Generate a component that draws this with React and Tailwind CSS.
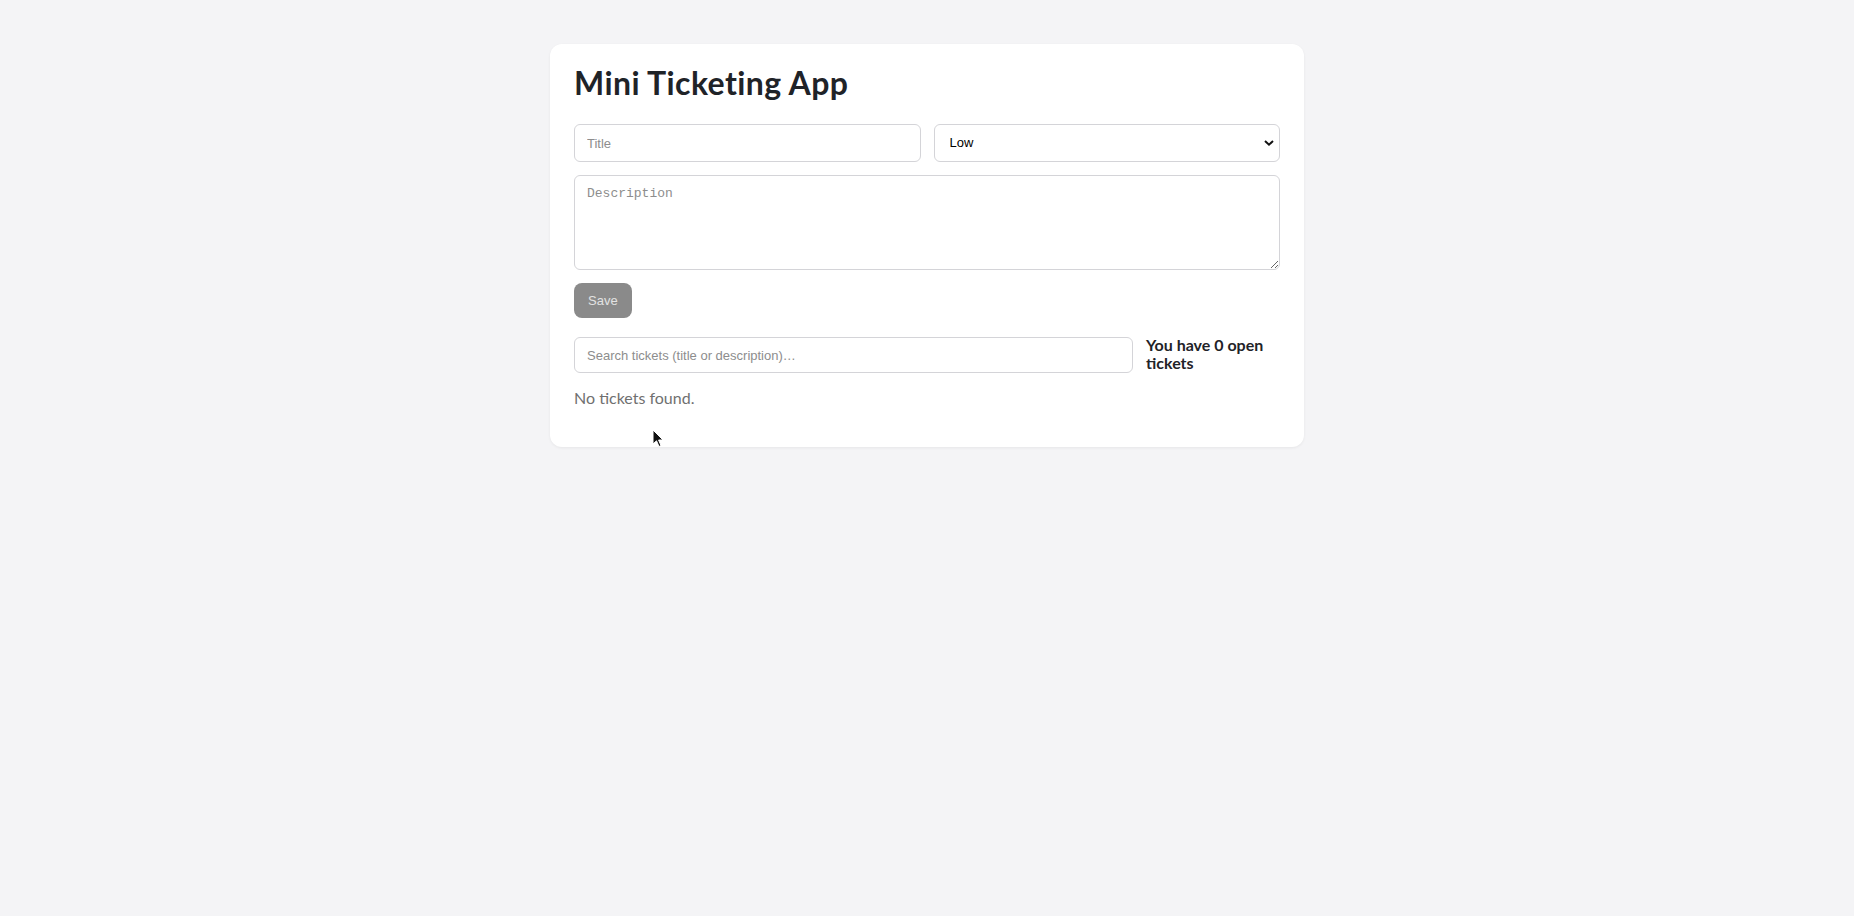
import React, { useState } from "react";

export default function App() {
  const [title, setTitle] = useState("");
  const [desc, setDesc] = useState("");
  const [q, setQ] = useState("");
  return (
    <div className="min-h-screen w-full bg-[#f4f4f6] relative" style={{ fontFamily: "Lato, 'Noto Sans', sans-serif" }}>
      <div className="pt-[44px] flex justify-center">
        <div className="w-[754px] bg-white rounded-[12px] shadow-[0_1px_3px_rgba(0,0,0,0.06)] px-6 pt-[20px] pb-[37px]">
          <h1 className="text-[32px] leading-[37px] font-bold tracking-[0.4px] text-[#1f2328] mb-[23px]">Mini Ticketing App</h1>
          <div className="grid grid-cols-2 gap-[13px]">
            <input
              value={title}
              onChange={(e) => setTitle(e.target.value)}
              placeholder="Title"
              className="h-[38px] border border-[#d4d4d8] rounded-md px-3 text-[13px] text-black placeholder:text-[#8d8d8d] outline-none"
              style={{ fontFamily: "'Liberation Sans', Arial, sans-serif" }}
            />
            <div className="relative">
              <select
                className="appearance-none w-full h-[38px] border border-[#d4d4d8] rounded-md pl-[15px] pr-8 text-[13px] text-black bg-white outline-none"
                style={{ fontFamily: "'Liberation Sans', Arial, sans-serif" }}
                defaultValue="Low"
              >
                <option>Low</option>
                <option>Medium</option>
                <option>High</option>
              </select>
              <svg className="absolute right-[6px] top-1/2 -translate-y-1/2 pointer-events-none" width="10" height="7" viewBox="0 0 10 7">
                <path d="M1 1.5 L5 5.2 L9 1.5" fill="none" stroke="#111" strokeWidth="2" />
              </svg>
            </div>
          </div>
          <textarea
            value={desc}
            onChange={(e) => setDesc(e.target.value)}
            placeholder="Description"
            className="mt-[13px] block w-full h-[95px] border border-[#d4d4d8] rounded-md px-3 py-2 text-[13px] placeholder:text-[#8d8d8d] outline-none"
            style={{ fontFamily: "'Liberation Mono', 'DejaVu Sans Mono', monospace" }}
          />
          <button
            className="mt-[13px] h-[35px] px-[14px] rounded-lg bg-[#8a8a8a] text-[#e2e2e2] text-[13px]"
            style={{ fontFamily: "'Liberation Sans', Arial, sans-serif" }}
          >
            Save
          </button>
          <div className="mt-[19px] flex items-start gap-[13px]">
            <input
              value={q}
              onChange={(e) => setQ(e.target.value)}
              placeholder="Search tickets (title or description)…"
              className="flex-1 h-[36px] border border-[#d4d4d8] rounded-md px-3 text-[13px] placeholder:text-[#8d8d8d] outline-none"
              style={{ fontFamily: "'Liberation Sans', Arial, sans-serif" }}
            />
            <div className="w-[134px] text-[16px] leading-[18px] font-bold text-[#1f2328] -mt-px">
              You have 0 open tickets
            </div>
          </div>
          <p className="mt-[13px] text-[16px] leading-[24px] text-[#707070]">No tickets found.</p>
        </div>
      </div>
      <svg className="absolute left-[652px] top-[429px]" width="12" height="19" viewBox="0 0 12 19">
        <path d="M1 1 L1 15 L4.5 11.8 L7 17.5 L9 16.6 L6.6 11 L11 11 Z" fill="#111" stroke="#fff" strokeWidth="1" />
      </svg>
    </div>
  );
}
